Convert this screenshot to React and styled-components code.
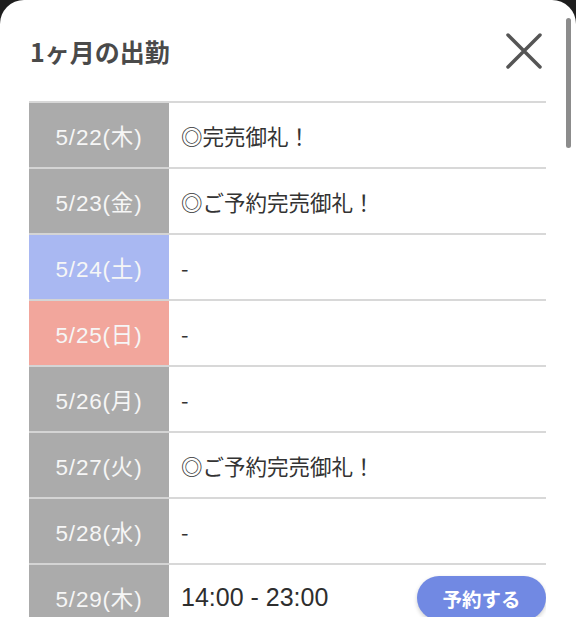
import React from 'react';
import styled, { createGlobalStyle } from 'styled-components';

const GlobalStyle = createGlobalStyle`
  html, body {
    margin: 0;
    padding: 0;
    background: #1e1e1e;
  }
  body {
    font-family: "Noto Sans CJK JP", "Noto Sans", sans-serif;
  }
`;

const Panel = styled.div`
  position: relative;
  width: 576px;
  height: 634px;
  background: #fff;
  border-radius: 24px 24px 0 0;
  overflow: hidden;
`;

const ScrollThumb = styled.div`
  position: absolute;
  top: 18px;
  right: 5px;
  width: 5px;
  height: 130px;
  border-radius: 3px;
  background: #8c8c8c;
`;

const Header = styled.div`
  height: 101px;
  display: flex;
  align-items: center;
  justify-content: space-between;
  padding: 0 34px 0 30px;
  box-sizing: border-box;
`;

const Title = styled.h2`
  margin: 0;
  font-size: 25px;
  font-weight: 700;
  color: #4a4a4a;
`;

const CloseButton = styled.button`
  border: 0;
  background: none;
  padding: 0;
  width: 36px;
  height: 36px;
  display: flex;
  align-items: center;
  justify-content: center;
`;

const TableWrap = styled.div`
  height: 516px;
  margin: 0 30px 0 29px;
  overflow: hidden;
`;

const Row = styled.div`
  display: grid;
  grid-template-columns: 140px 1fr;
  height: 66px;
  border-top: 2px solid #d8d8d8;
  box-sizing: border-box;
`;

const dayColors = {
  weekday: '#ababab',
  sat: '#a9b8f2',
  sun: '#f2a69c',
};

const DateCell = styled.div`
  background: ${(p) => dayColors[p.$kind]};
  color: #f6f6f6;
  font-family: "Liberation Sans", "Noto Sans CJK JP", sans-serif;
  font-size: 22.5px;
  letter-spacing: 0.8px;
  display: flex;
  align-items: center;
  justify-content: center;
  margin-top: -2px;
  border-top: 2px solid ${(p) => (p.$first ? '#d8d8d8' : '#d4d4d4')};
`;

const InfoCell = styled.div`
  display: flex;
  align-items: center;
  justify-content: space-between;
  padding: 0 0 0 12px;
  font-size: 21.5px;
  color: #333;
`;

const TimeText = styled.span`
  font-family: "Liberation Sans", "Noto Sans CJK JP", sans-serif;
  font-size: 25px;
  color: #2e2e2e;
`;

const ReserveButton = styled.button`
  width: 129px;
  height: 44px;
  border: 0;
  border-radius: 22px;
  background: #7189e3;
  color: #fff;
  font-family: inherit;
  font-size: 19.5px;
  font-weight: 700;
  box-shadow: 0 2px 4px rgba(0, 0, 0, 0.2);
  margin-top: 2px;
`;

const schedule = [
  { date: '5/22(木)', kind: 'weekday', text: '◎完売御礼！' },
  { date: '5/23(金)', kind: 'weekday', text: '◎ご予約完売御礼！' },
  { date: '5/24(土)', kind: 'sat', text: '-' },
  { date: '5/25(日)', kind: 'sun', text: '-' },
  { date: '5/26(月)', kind: 'weekday', text: '-' },
  { date: '5/27(火)', kind: 'weekday', text: '◎ご予約完売御礼！' },
  { date: '5/28(水)', kind: 'weekday', text: '-' },
  { date: '5/29(木)', kind: 'weekday', time: '14:00 - 23:00', reserve: true },
];

const CloseIcon = () => (
  <svg width="36" height="36" viewBox="0 0 36 36">
    <path
      d="M2 2 L34 34 M34 2 L2 34"
      stroke="#555"
      strokeWidth="3.5"
      strokeLinecap="round"
    />
  </svg>
);

const App = () => (
  <>
    <GlobalStyle />
    <Panel>
      <Header>
        <Title>1ヶ月の出勤</Title>
        <CloseButton aria-label="close">
          <CloseIcon />
        </CloseButton>
      </Header>
      <TableWrap>
        {schedule.map((item, i) => (
          <Row key={item.date}>
            <DateCell $kind={item.kind} $first={i === 0}>
              {item.date}
            </DateCell>
            <InfoCell>
              {item.time ? <TimeText>{item.time}</TimeText> : <span>{item.text}</span>}
              {item.reserve && <ReserveButton>予約する</ReserveButton>}
            </InfoCell>
          </Row>
        ))}
      </TableWrap>
      <ScrollThumb />
    </Panel>
  </>
);

export default App;
